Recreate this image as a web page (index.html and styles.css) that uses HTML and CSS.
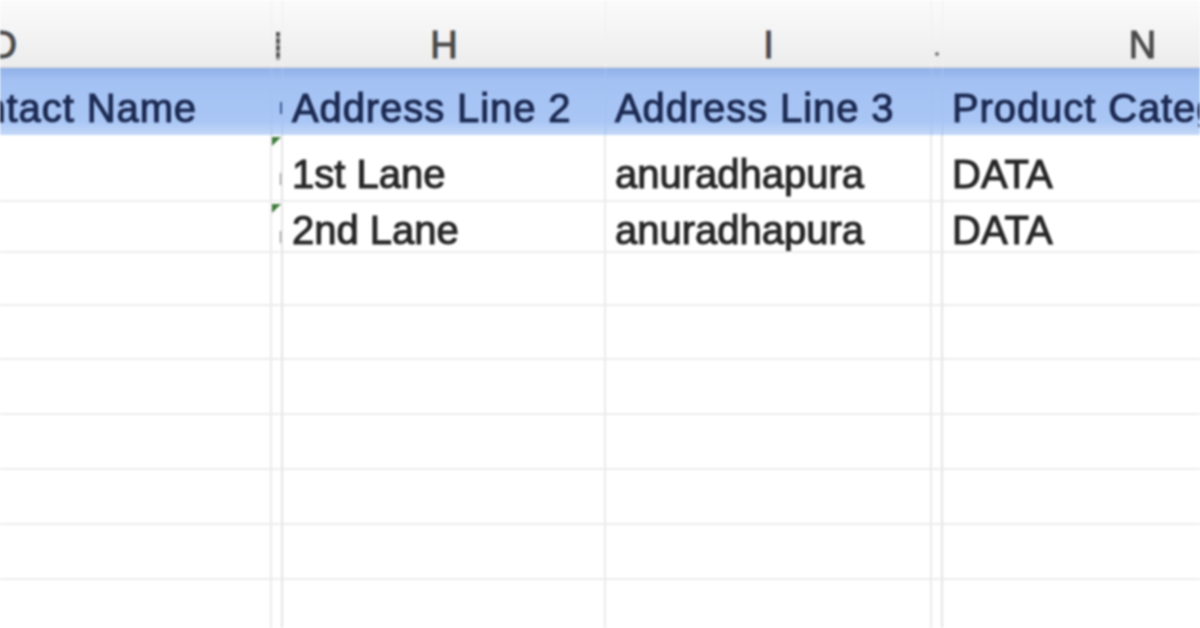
FILE: index.html
```html
<!DOCTYPE html>
<html lang="en">
<head>
<meta charset="utf-8">
<title>Sheet</title>
<link rel="stylesheet" href="styles.css">
</head>
<body>
<div class="sheet">
  <div class="grid">
    <!-- column letters -->
    <div class="cell letter col-d"><span>D</span></div>
    <div class="cell letter narrow"><span class="emark"></span></div>
    <div class="cell letter center">H</div>
    <div class="cell letter center">I</div>
    <div class="cell letter narrow"><span class="dot"></span></div>
    <div class="cell letter center">N</div>

    <!-- header row -->
    <div class="cell head col-d"><span class="dtext">Contact Name</span></div>
    <div class="cell head narrow"><span class="mark mark-blue"></span></div>
    <div class="cell head">Address Line 2</div>
    <div class="cell head">Address Line 3</div>
    <div class="cell head narrow"></div>
    <div class="cell head">Product Category</div>

    <!-- row 1 -->
    <div class="cell r1 col-d"></div>
    <div class="cell r1 narrow"><span class="tri"></span><span class="mark"></span></div>
    <div class="cell r1">1st Lane</div>
    <div class="cell r1">anuradhapura</div>
    <div class="cell r1 narrow"></div>
    <div class="cell r1">DATA</div>

    <!-- row 2 -->
    <div class="cell r2 col-d"></div>
    <div class="cell r2 narrow"><span class="tri"></span><span class="mark"></span></div>
    <div class="cell r2">2nd Lane</div>
    <div class="cell r2">anuradhapura</div>
    <div class="cell r2 narrow"></div>
    <div class="cell r2">DATA</div>

    <!-- empty rows -->
    <div class="cell col-d"></div><div class="cell narrow"></div><div class="cell"></div><div class="cell"></div><div class="cell narrow"></div><div class="cell"></div>
    <div class="cell col-d"></div><div class="cell narrow"></div><div class="cell"></div><div class="cell"></div><div class="cell narrow"></div><div class="cell"></div>
    <div class="cell col-d"></div><div class="cell narrow"></div><div class="cell"></div><div class="cell"></div><div class="cell narrow"></div><div class="cell"></div>
    <div class="cell col-d"></div><div class="cell narrow"></div><div class="cell"></div><div class="cell"></div><div class="cell narrow"></div><div class="cell"></div>
    <div class="cell col-d"></div><div class="cell narrow"></div><div class="cell"></div><div class="cell"></div><div class="cell narrow"></div><div class="cell"></div>
    <div class="cell col-d"></div><div class="cell narrow"></div><div class="cell"></div><div class="cell"></div><div class="cell narrow"></div><div class="cell"></div>
    <div class="cell col-d"></div><div class="cell narrow"></div><div class="cell"></div><div class="cell"></div><div class="cell narrow"></div><div class="cell"></div>
  </div>
</div>
</body>
</html>
```
FILE: styles.css
```css
html, body {
  margin: 0;
  padding: 0;
  background: #ffffff;
  overflow: hidden;
}

.sheet {
  width: 1200px;
  height: 628px;
  overflow: hidden;
  font-family: "Liberation Sans", Arial, sans-serif;
  filter: blur(1px);
}

.grid {
  display: grid;
  grid-template-columns: 272px 11px 323px 326px 11px 400px;
  grid-template-rows: 68px 67px 67px 51px 53px 54px 55px 55px 55px 55px 55px;
}

.cell {
  position: relative;
  box-sizing: border-box;
  display: flex;
  align-items: flex-end;
  overflow: hidden;
  white-space: nowrap;
  padding-left: 9px;
  font-size: 40px;
  line-height: 40px;
  color: #262626;
  -webkit-text-stroke: 1.1px currentColor;
  border-right: 2px solid #ebebeb;
  border-bottom: 2px solid #ececec;
}

.col-d {
  padding-left: 0;
  justify-content: flex-end;
}

.narrow {
  padding-left: 0;
  border-right: 2px solid #e4e4e4;
}

/* column letters row */
.letter {
  background: linear-gradient(#fbfbfb, #f3f3f3 55%, #ececec);
  border-right: 1px solid #efefef;
  border-bottom: 1px solid #d6d6d6;
  font-size: 38px;
  line-height: 38px;
  color: #4a4a4a;
  padding-bottom: 3px;
  padding-left: 0;
}

.letter.center {
  justify-content: center;
}

.letter.col-d span {
  padding-right: 254px;
}

.emark {
  display: block;
  width: 4px;
  height: 28px;
  margin: 0 0 4px 4px;
  background: repeating-linear-gradient(#555 0 4px, #999 4px 7px);
}

.dot {
  display: block;
  width: 4px;
  height: 4px;
  border-radius: 2px;
  margin: 0 0 8px 3px;
  background: #777;
}

/* header row */
.head {
  background: linear-gradient(#8fb0e8, #a3c1f3 18%, #a9c6f5 80%, #c4d9f8);
  color: #1c2a52;
  letter-spacing: 0.9px;
  border-right: 1px solid #a3c0ef;
  border-bottom: none;
  padding-bottom: 7px;
}

.head .dtext {
  padding-right: 74px;
}

.r1 {
  padding-bottom: 6px;
}

.r2 {
  padding-bottom: 1px;
}

.mark {
  display: block;
  width: 3px;
  height: 12px;
  margin: 0 0 3px 8px;
  background: #7a7a7a;
}

.mark-blue {
  background: #3b5a95;
  margin-bottom: 14px;
}

.r1 .mark {
  margin-bottom: 9px;
}

.r2 .mark {
  margin-bottom: 7px;
}

.tri {
  position: absolute;
  top: 2px;
  left: 0;
  width: 0;
  height: 0;
  border-top: 9px solid #3d7b3a;
  border-right: 9px solid transparent;
}
```
